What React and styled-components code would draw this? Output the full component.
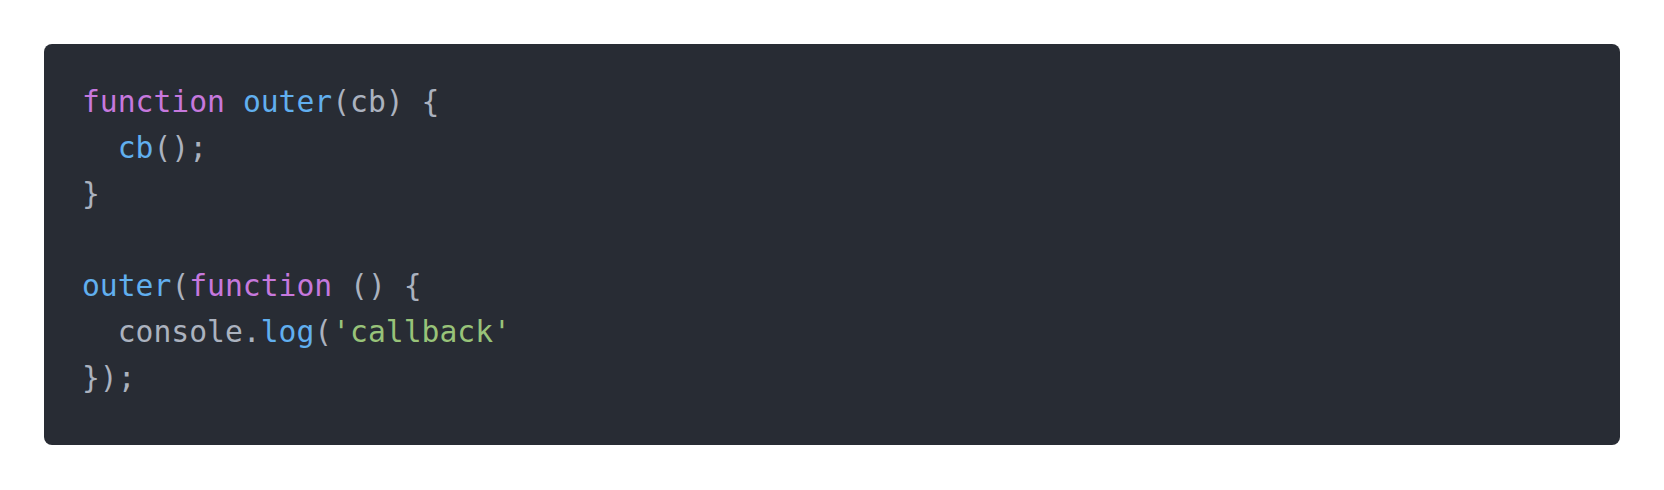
import React from "react";
import styled, { createGlobalStyle } from "styled-components";

const Global = createGlobalStyle`
  html, body { margin: 0; padding: 0; background: #ffffff; }
  body { font-family: "DejaVu Sans Mono", monospace; }
`;

const Page = styled.div`
  padding: 44px;
`;

const CodeBlock = styled.pre`
  margin: 0;
  background: #282c34;
  border-radius: 8px;
  padding: 35px 38px 44px;
  font-family: "DejaVu Sans Mono", "Liberation Mono", monospace;
  font-size: 29.7px;
  line-height: 46px;
  color: #abb2bf;
  overflow: hidden;
`;

const Line = styled.div`
  white-space: pre;
  height: 46px;
`;

const palette = {
  keyword: "#c678dd",
  fn: "#61afef",
  string: "#98c379",
  plain: "#abb2bf",
};

const Tok = styled.span`
  color: ${(p) => palette[p.$kind || "plain"]};
`;

const lines = [
  [["keyword", "function"], ["plain", " "], ["fn", "outer"], ["plain", "(cb) {"]],
  [["plain", "  "], ["fn", "cb"], ["plain", "();"]],
  [["plain", "}"]],
  [],
  [["fn", "outer"], ["plain", "("], ["keyword", "function"], ["plain", " () {"]],
  [["plain", "  console."], ["fn", "log"], ["plain", "("], ["string", "'callback'"]],
  [["plain", "});"]],
];

export default function App() {
  return (
    <>
      <Global />
      <Page>
        <CodeBlock>
          {lines.map((toks, i) => (
            <Line key={i}>
              {toks.map(([k, t], j) => (
                <Tok key={j} $kind={k}>
                  {t}
                </Tok>
              ))}
            </Line>
          ))}
        </CodeBlock>
      </Page>
    </>
  );
}
